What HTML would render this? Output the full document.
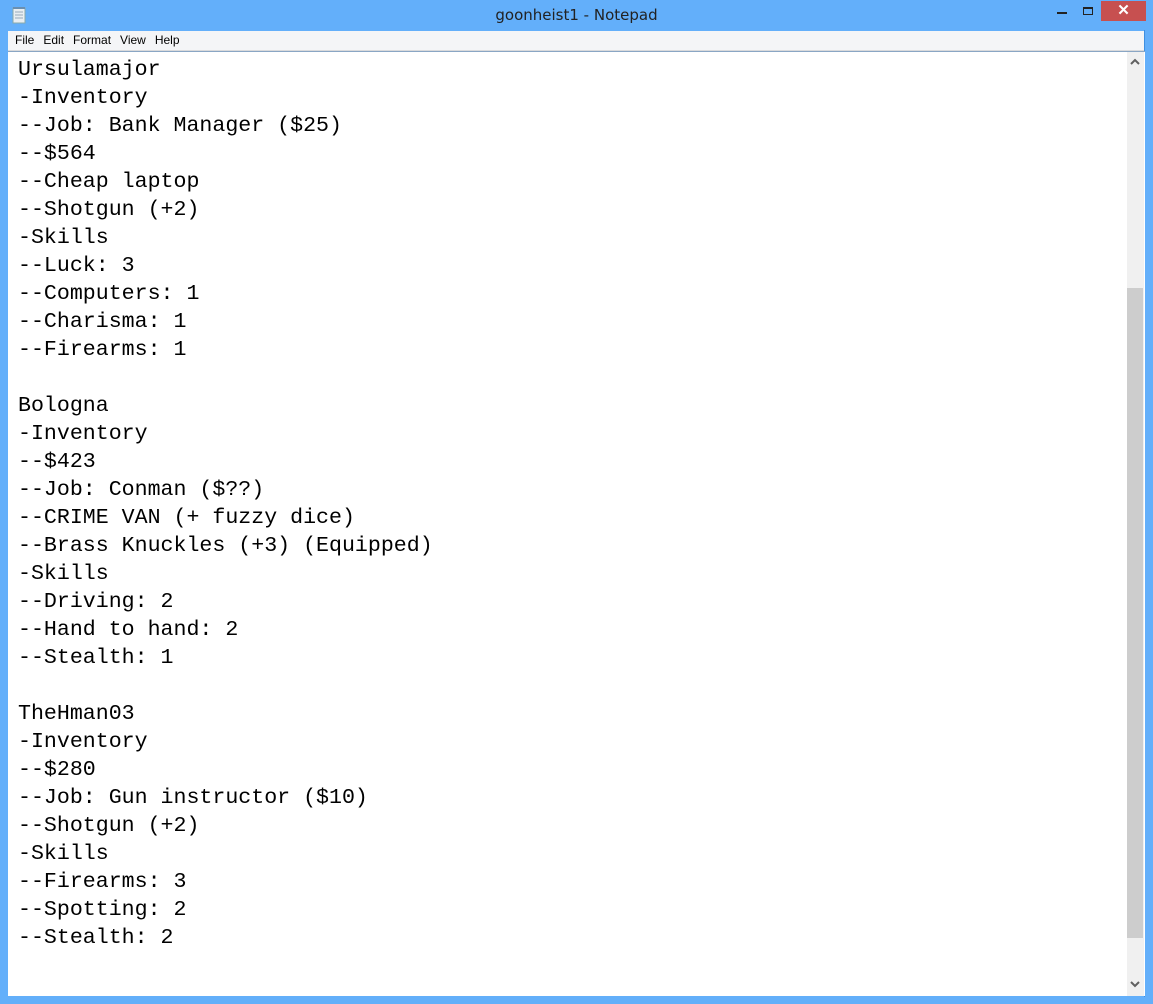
<!DOCTYPE html>
<html><head><style>
body{margin:0;width:1153px;height:1004px;background:#63affa;position:relative;overflow:hidden;font-family:"Liberation Sans",sans-serif}
.title{position:absolute;left:0;top:0;width:1153px;height:30px;text-align:center;font-size:15px;line-height:31px;color:#222;font-family:"DejaVu Sans","Liberation Sans",sans-serif}
.close{position:absolute;left:1101px;top:1px;width:45px;height:20px;background:#c75050;color:#fff;text-align:center;font-size:15px;line-height:20px;font-weight:bold}
.menu{position:absolute;left:8px;top:31px;width:1137px;height:19px;background:#f4f5f7;border-bottom:1px solid #d9dadc;font-size:12px;line-height:19px;color:#000}
.menu span{margin-left:7px;margin-right:2px}
.edit{position:absolute;left:8px;top:51px;width:1137px;height:944px;background:#fff;border-top:1px solid #8aa6c4}
pre{margin:0;position:absolute;left:10px;top:4px;font-family:"Liberation Mono",monospace;font-size:21.6px;line-height:28px;color:#000}
.sb{position:absolute;left:1119px;top:0;width:17px;height:944px;background:#f0f0f0}
.th{position:absolute;left:1119px;top:236px;width:16px;height:650px;background:#cdcdcd}
.rb{position:absolute;left:1144px;top:30px;width:1px;height:967px;background:#3f8fe0}
</style></head><body>
<svg style="position:absolute;left:11px;top:6px" width="16" height="18"><rect x="2" y="2" width="12" height="15" fill="#e8eef2" stroke="#8aa"/><path d="M4 6h8M4 9h8M4 12h8" stroke="#9ab"/><rect x="2" y="1" width="12" height="2" fill="#6a8fb0"/></svg>
<div class="title">goonheist1 - Notepad</div>
<div style="position:absolute;left:1057px;top:12px;width:10px;height:2px;background:#222"></div>
<div style="position:absolute;left:1083px;top:7px;width:8px;height:5px;border:1px solid #222;border-top-width:2px"></div>
<div class="close">✕</div>
<div class="menu"><span>File</span><span>Edit</span><span>Format</span><span>View</span><span>Help</span></div>
<div class="rb"></div>
<div class="edit">
<pre>Ursulamajor
-Inventory
--Job: Bank Manager ($25)
--$564
--Cheap laptop
--Shotgun (+2)
-Skills
--Luck: 3
--Computers: 1
--Charisma: 1
--Firearms: 1

Bologna
-Inventory
--$423
--Job: Conman ($??)
--CRIME VAN (+ fuzzy dice)
--Brass Knuckles (+3) (Equipped)
-Skills
--Driving: 2
--Hand to hand: 2
--Stealth: 1

TheHman03
-Inventory
--$280
--Job: Gun instructor ($10)
--Shotgun (+2)
-Skills
--Firearms: 3
--Spotting: 2
--Stealth: 2</pre>
<div class="sb"></div>
<div class="th"></div>
<svg style="position:absolute;left:1122px;top:6px" width="10" height="8"><path d="M1 6L5 2L9 6" stroke="#606060" stroke-width="2" fill="none"/></svg>
<svg style="position:absolute;left:1122px;top:928px" width="10" height="8"><path d="M1 2L5 6L9 2" stroke="#606060" stroke-width="2" fill="none"/></svg>
</div>
</body></html>
